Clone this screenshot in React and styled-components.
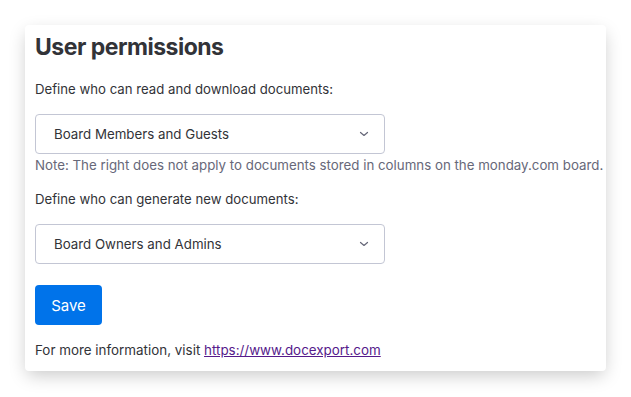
import React from 'react';
import styled, { createGlobalStyle } from 'styled-components';

const GlobalStyle = createGlobalStyle`
  body {
    margin: 0;
    background: #ffffff;
    font-family: Inter, "Noto Sans", sans-serif;
    color: #323338;
  }
`;

const Page = styled.div`
  padding: 25px;
`;

const Card = styled.section`
  width: 581px;
  box-sizing: border-box;
  padding: 6px 10px 12px 10px;
  background: #ffffff;
  border-radius: 4px;
  box-shadow: 0 6px 18px -2px rgba(0, 0, 0, 0.22);
`;

const Title = styled.h2`
  margin: 0 0 17px 0;
  font-size: 23px;
  line-height: 32px;
  font-weight: 700;
  letter-spacing: -0.5px;
  color: #323338;
`;

const Label = styled.p`
  margin: 0 0 16px 0;
  font-size: 13.2px;
  line-height: 18px;
`;

const Select = styled.div`
  width: 350px;
  height: 40px;
  box-sizing: border-box;
  display: flex;
  align-items: center;
  justify-content: space-between;
  padding: 0 15px 0 18px;
  border: 1px solid #c3c6d4;
  border-radius: 4px;
  font-size: 13.3px;
  color: #323338;
`;

const Note = styled.p`
  margin: 2px 0 16px 0;
  font-size: 13.3px;
  line-height: 18px;
  color: #676879;
  white-space: nowrap;
`;

const Gap = styled.div`
  height: ${(p) => p.size}px;
`;

const SaveButton = styled.button`
  display: block;
  width: 67px;
  height: 40px;
  border: none;
  border-radius: 4px;
  background: #0073ea;
  color: #ffffff;
  font-family: inherit;
  font-size: 15px;
  cursor: pointer;
`;

const Footer = styled.p`
  margin: 16px 0 0 0;
  font-size: 13.4px;
  line-height: 18px;

  a {
    color: #551a8b;
  }
`;

function Chevron() {
  return (
    <svg width="10" height="10" viewBox="0 0 10 10" fill="none">
      <path d="M1.5 3.5 L5 6.5 L8.5 3.5" stroke="#676879" strokeWidth="1.2" strokeLinecap="round" strokeLinejoin="round" />
    </svg>
  );
}

export default function App() {
  return (
    <>
      <GlobalStyle />
      <Page>
        <Card>
          <Title>User permissions</Title>
          <Label>Define who can read and download documents:</Label>
          <Select>
            <span>Board Members and Guests</span>
            <Chevron />
          </Select>
          <Note>Note: The right does not apply to documents stored in columns on the monday.com board.</Note>
          <Label>Define who can generate new documents:</Label>
          <Select>
            <span>Board Owners and Admins</span>
            <Chevron />
          </Select>
          <Gap size={21} />
          <SaveButton type="button">Save</SaveButton>
          <Footer>
            For more information, visit <a href="#">https://www.docexport.com</a>
          </Footer>
        </Card>
      </Page>
    </>
  );
}
